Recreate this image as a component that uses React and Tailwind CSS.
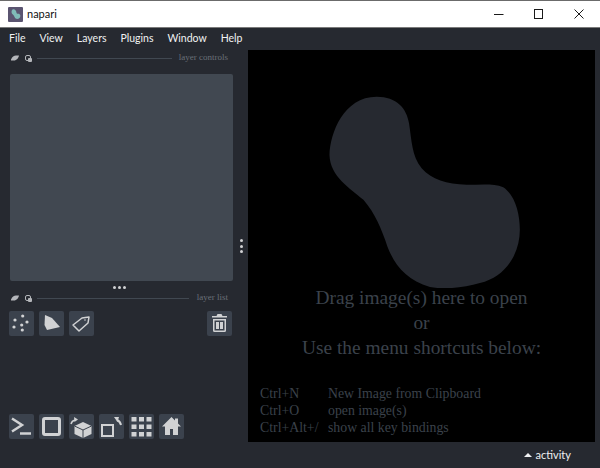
const PanelHeader = ({ label, lineWidth }) => (
  <div className="flex items-center h-4 pl-[11px]">
    <svg width="8" height="6" viewBox="0 0 8 6">
      <path d="M0 4.500C1 2 3 .5 5 .5h3C7.500 3 5.500 5.500 3 5.500H0z" fill="#b4b6ba" />
    </svg>
    <svg width="7" height="7" viewBox="0 0 7 7" className="ml-[6px]">
      <rect x="0.500" y="0.500" width="5" height="5" rx="1.500" fill="none" stroke="#b4b6ba" />
      <rect x="3" y="3" width="4" height="4" rx="1" fill="#b4b6ba" />
    </svg>
    <div className="ml-[5px] h-px bg-[#414851]" style={{ width: lineWidth }} />
    <span className="ml-auto pr-[9px] text-[9px] text-[#6a7078] font-['Liberation_Serif',serif]">{label}</span>
  </div>
);

const IconButton = ({ children, className = '' }) => (
  <button className={`flex items-center justify-center w-[25px] h-[25px] rounded-[2px] bg-[#3b424d] text-[#d1d2d4] ${className}`}>
    <svg width="25" height="25" viewBox="0 0 25 25">{children}</svg>
  </button>
);

const Dots = ({ className }) => (
  <div className={className}>
    <span className="w-[3px] h-[3px] rounded-full bg-[#d1d2d4]" />
    <span className="w-[3px] h-[3px] rounded-full bg-[#d1d2d4]" />
    <span className="w-[3px] h-[3px] rounded-full bg-[#d1d2d4]" />
  </div>
);

const menus = ['File', 'View', 'Layers', 'Plugins', 'Window', 'Help'];
const gridCells = [2.5, 10, 17.5];

export default function App() {
  return (
    <div className="flex flex-col w-[600px] h-[468px] overflow-hidden bg-[#262930] font-['Lato',sans-serif]">
      {/* Title bar */}
      <div className="flex items-center h-[28px] shrink-0 bg-white border-t border-t-[#6b6b6b] border-b border-b-[#7a7a7a]">
        <svg width="15" height="15" viewBox="0 0 14 14" className="ml-[8px]">
          <rect width="14" height="14" rx="1" fill="#5a5470" />
          <path d="M4 2.500c2-1 3.500.5 4 3 .5 1.500 3-.5 3.500 2.500.3 2.500-2 3.500-4 3-1.500-.5-1.500-3-3-4C3 6 3 3.500 4 2.500z" fill="#80bbb8" />
        </svg>
        <span className="ml-[4px] text-[11px] text-[#111]">napari</span>
        <div className="ml-auto flex items-center">
          <svg width="106" height="14" viewBox="0 0 106 14" fill="none" stroke="#1a1a1a">
            <path d="M0 7.500h9.500" />
            <rect x="40.500" y="2.500" width="8" height="9" />
            <path d="M80.500 2.500l9 9M89.500 2.500l-9 9" />
          </svg>
        </div>
      </div>

      {/* Menu bar */}
      <div className="flex items-center h-[22px] shrink-0 pl-[9px] gap-[14px] text-[10.5px] text-[#f0f1f2]">
        {menus.map((m) => (
          <span key={m}>{m}</span>
        ))}
      </div>

      {/* Main */}
      <div className="flex flex-1 min-h-0">
        {/* Left dock */}
        <div className="flex flex-col w-[237px] shrink-0">
          <PanelHeader label="layer controls" lineWidth={135} />
          <div className="mt-2 ml-[10px] w-[223px] h-[207px] rounded-[2px] bg-[#414851]" />
          <Dots className="flex justify-center gap-[2px] mt-[5px] h-[2px] pl-[2px]" />
          <div className="mt-[2px]">
            <PanelHeader label="layer list" lineWidth={152} />
          </div>
          <div className="flex mt-[5px] pl-[9px] pr-[5px] gap-[5px]">
            <IconButton>
              <g fill="currentColor">
                <circle cx="13.700" cy="5" r="1.600" />
                <circle cx="6" cy="9" r="1.600" />
                <circle cx="18" cy="11" r="1.600" />
                <circle cx="12.700" cy="14" r="1.600" />
                <circle cx="5" cy="16" r="1.600" />
                <circle cx="13.300" cy="19" r="1.600" />
              </g>
            </IconButton>
            <IconButton>
              <path d="M6 4l7 3 8 9-13 3-2.500-5z" fill="currentColor" />
            </IconButton>
            <IconButton>
              <path d="M4 14l9-7 7-1-1 6-9 8z" fill="none" stroke="currentColor" strokeWidth="1.500" strokeLinejoin="round" />
              <circle cx="16" cy="9" r="0.800" fill="currentColor" />
            </IconButton>
            <IconButton className="ml-auto">
              <g fill="currentColor">
                <path d="M5 5h4.500l1-2h4l1 2H20v1.500H5z" />
                <path fillRule="evenodd" d="M6 8h13v11.500a1.500 1.500 0 01-1.500 1.500h-10A1.500 1.500 0 016 19.500zM7.500 9.500v10h10v-10zM9 11h3v7H9zM13 11h3v7h-3z" />
              </g>
            </IconButton>
          </div>
          <div className="flex mt-auto mb-[3px] pl-[9px] gap-[5px]">
            <IconButton>
              <g fill="none" stroke="currentColor" strokeWidth="2.500">
                <path d="M3 4.500l10 6.500-10 6.500" />
                <path d="M11 19.500h11" />
              </g>
            </IconButton>
            <IconButton>
              <rect x="4.500" y="4.500" width="16" height="16" rx="1.500" fill="none" stroke="currentColor" strokeWidth="3" />
            </IconButton>
            <IconButton>
              <path d="M5.500 12l8.500-4 8.500 4v8l-8.500 4-8.500-4z" fill="currentColor" />
              <path d="M5.500 12l8.500 4 8.500-4M14 16v8" fill="none" stroke="#3b424d" strokeWidth="1" />
              <path d="M2 10c.5-2 2-3.500 4-4" fill="none" stroke="currentColor" strokeWidth="1.500" />
              <path d="M5 3l4 2.500-3.500 2.500z" fill="currentColor" />
            </IconButton>
            <IconButton>
              <rect x="3" y="11" width="11" height="11" fill="none" stroke="currentColor" strokeWidth="2" />
              <path d="M18 6c2 1 3.500 2.500 4 5" fill="none" stroke="currentColor" strokeWidth="2" />
              <path d="M15 3h5l-1.500 5z" fill="currentColor" />
            </IconButton>
            <IconButton>
              <g fill="currentColor">
                {gridCells.map((y) =>
                  gridCells.map((x) => <rect key={`${x}-${y}`} x={x} y={y + 0.5} width="5" height="4.500" />)
                )}
              </g>
            </IconButton>
            <IconButton>
              <path d="M12.500 3L3 12.500h3V21h5v-6h3v6h5v-8.500h3l-3-3V4.500h-3v2z" fill="currentColor" />
            </IconButton>
          </div>
        </div>

        {/* Splitter */}
        <Dots className="flex flex-col items-center justify-center gap-[2.5px] w-[11px] shrink-0 pr-[2px]" />

        {/* Canvas */}
        <div className="flex flex-col w-[347px] h-[392px] bg-black text-[#3b424b] font-['Liberation_Serif',serif]">
          <svg width="240" height="208" viewBox="0 0 720 625" className="mt-[30px] ml-[52px] shrink-0">
            <path
              d="M230 50C290 50 320 85 327 130C335 180 335 230 365 265C395 300 440 312 500 315C540 315 580 310 610 322C645 345 660 400 660 450C660 520 620 590 540 610C490 625 430 630 390 622C320 600 285 560 262 500C245 450 225 400 190 360C150 325 90 290 88 225C90 160 130 50 230 50Z"
              fill="#262930"
            />
          </svg>
          <div className="text-center text-[19.4px] leading-[25px] -mt-[3px]">
            <div>Drag image(s) here to open</div>
            <div>or</div>
            <div>Use the menu shortcuts below:</div>
          </div>
          <div className="mt-[25px] ml-[12px] grid grid-cols-[68px_1fr] text-[13.8px] leading-[17px]">
            <span>Ctrl+N</span>
            <span>New Image from Clipboard</span>
            <span>Ctrl+O</span>
            <span>open image(s)</span>
            <span>Ctrl+Alt+/</span>
            <span>show all key bindings</span>
          </div>
        </div>
      </div>

      {/* Status bar */}
      <div className="flex items-center justify-end h-[26px] shrink-0 pr-[29px] text-[11px] text-[#f0f1f2]">
        <span className="mr-[4px] w-0 h-0 border-x-[4px] border-x-transparent border-b-[4px] border-b-[#f0f1f2]" />
        <span>activity</span>
      </div>
    </div>
  );
}
